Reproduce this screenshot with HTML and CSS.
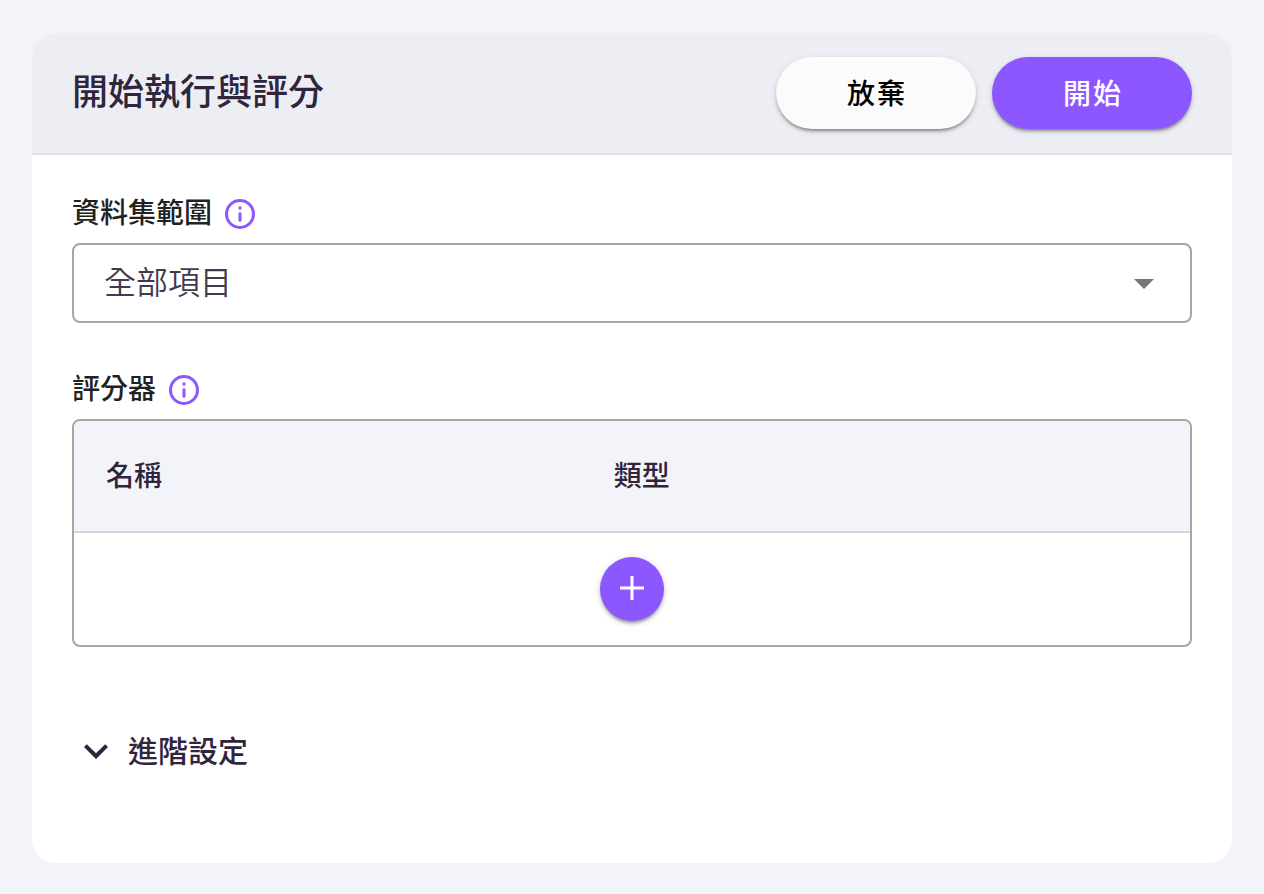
FILE: index.html
```html
<!DOCTYPE html>
<html lang="zh-Hant">
<head>
<meta charset="utf-8">
<meta name="viewport" content="width=device-width, initial-scale=1">
<title>開始執行與評分</title>
<link rel="stylesheet" href="styles.css">
</head>
<body>
<main class="card">
  <header class="card-header">
    <h1 class="title">開始執行與評分</h1>
    <div class="actions">
      <button class="btn btn-plain" type="button">放棄</button>
      <button class="btn btn-primary" type="button">開始</button>
    </div>
  </header>
  <div class="card-body">
    <section class="field">
      <div class="label-row">
        <label class="label" for="scope">資料集範圍</label>
        <svg class="info" viewBox="0 0 24 24" aria-hidden="true"><path d="M11 9h2V7h-2m1 13c-4.41 0-8-3.59-8-8s3.59-8 8-8 8 3.59 8 8-3.59 8-8 8m0-18A10 10 0 0 0 2 12a10 10 0 0 0 10 10 10 10 0 0 0 10-10A10 10 0 0 0 12 2m-1 15h2v-6h-2v6z"/></svg>
      </div>
      <div class="select-wrap">
        <select class="select" id="scope">
          <option>全部項目</option>
        </select>
        <svg class="caret" viewBox="0 0 20 10" aria-hidden="true"><path d="M0 0h20L10 10z"/></svg>
      </div>
    </section>
    <section class="field">
      <div class="label-row">
        <h2 class="label" id="graders">評分器</h2>
        <svg class="info" viewBox="0 0 24 24" aria-hidden="true"><path d="M11 9h2V7h-2m1 13c-4.41 0-8-3.59-8-8s3.59-8 8-8 8 3.59 8 8-3.59 8-8 8m0-18A10 10 0 0 0 2 12a10 10 0 0 0 10 10 10 10 0 0 0 10-10A10 10 0 0 0 12 2m-1 15h2v-6h-2v6z"/></svg>
      </div>
      <div class="table-box">
        <table class="table" aria-labelledby="graders">
          <thead>
            <tr><th class="col-name" scope="col">名稱</th><th scope="col">類型</th></tr>
          </thead>
          <tbody>
            <tr>
              <td class="add-cell" colspan="2">
                <button class="add" type="button" aria-labelledby="graders">
                  <svg class="plus" viewBox="0 0 24 24" aria-hidden="true"><path d="M0 10.5h10.5V0h3v10.5H24v3H13.5V24h-3V13.5H0z"/></svg>
                </button>
              </td>
            </tr>
          </tbody>
        </table>
      </div>
    </section>
    <button class="advanced" type="button" aria-expanded="false">
      <svg class="chevron" viewBox="0 0 24 24" aria-hidden="true"><path d="M7.41 8.58 12 13.17l4.59-4.59L18 10l-6 6-6-6z"/></svg>
      <span class="advanced-text">進階設定</span>
    </button>
  </div>
</main>
</body>
</html>
```
FILE: styles.css
```css
* {
  box-sizing: border-box;
}

body {
  margin: 0;
  padding: 33px 32px 31px;
  min-height: 100vh;
  display: flex;
  flex-direction: column;
  background: #f3f4fa;
  color: #2f263d;
  font-family: "Noto Sans CJK TC", sans-serif;
}

button,
select {
  font-family: inherit;
  border: 0;
  cursor: pointer;
}

.card {
  flex: 1;
  border-radius: 24px;
  background: #fff;
  overflow: hidden;
}

.card-header {
  display: flex;
  align-items: center;
  justify-content: space-between;
  padding: 24px 40px;
  background: #edeef4;
  border-bottom: 2px solid #e2e2e5;
}

.title {
  margin: 0;
  padding-bottom: 8px;
  font-size: 36px;
  line-height: 52px;
  font-weight: 500;
}

.actions {
  display: flex;
  gap: 16px;
}

.btn {
  width: 200px;
  height: 72px;
  padding: 0 0 2px 2px;
  border-radius: 36px;
  font-size: 28px;
  line-height: 40px;
  font-weight: 500;
  letter-spacing: 2px;
  box-shadow: 0 3px 3px -1px rgba(0, 0, 0, .36), 0 2px 6px rgba(0, 0, 0, .14);
}

.btn-plain {
  background: #fbfbfb;
  color: #000;
}

.btn-primary {
  background: #8c57ff;
  color: #fff;
}

.card-body {
  padding: 40px;
}

.field {
  margin-bottom: 48px;
}

.label-row {
  display: flex;
  align-items: flex-end;
  gap: 10px;
  height: 36px;
  margin-bottom: 12px;
}

.label {
  margin: 0;
  padding-bottom: 2px;
  font-size: 28px;
  line-height: 36px;
  font-weight: 500;
  color: #212121;
}

.info {
  width: 36px;
  height: 36px;
  margin-bottom: -1px;
  fill: #8c57ff;
}

.select-wrap {
  position: relative;
}

.select {
  display: block;
  appearance: none;
  width: 100%;
  height: 80px;
  padding: 0 80px 6px 30px;
  border: 2px solid #a6a6a6;
  border-radius: 8px;
  background: #fff;
  color: #433a52;
  font-size: 32px;
  font-weight: 350;
}

.caret {
  position: absolute;
  top: 36px;
  right: 38px;
  width: 20px;
  height: 10px;
  fill: #757575;
  pointer-events: none;
}

.table-box {
  border: 2px solid #a6a6a6;
  border-radius: 8px;
  overflow: hidden;
}

.table {
  width: 100%;
  table-layout: fixed;
  border-collapse: separate;
  border-spacing: 0;
}

.table th {
  height: 112px;
  padding: 0 32px 4px;
  background: #f3f4fa;
  border-bottom: 2px solid #d5d4da;
  text-align: left;
  font-size: 28px;
  line-height: 40px;
  font-weight: 500;
}

.table .col-name {
  width: 45.5%;
}

.add-cell {
  padding: 24px;
}

.add {
  display: flex;
  align-items: center;
  justify-content: center;
  width: 64px;
  height: 64px;
  margin: 0 auto;
  padding: 0 0 2px;
  border-radius: 50%;
  background: #8c57ff;
  box-shadow: 0 3px 3px -1px rgba(0, 0, 0, .3), 0 2px 6px rgba(0, 0, 0, .2);
}

.plus {
  width: 24px;
  height: 24px;
  fill: #fff;
}

.advanced {
  display: flex;
  align-items: center;
  gap: 8px;
  margin-top: 80px;
  padding: 0;
  background: none;
  color: #2f263d;
  font-size: 30px;
  line-height: 44px;
  font-weight: 500;
}

.advanced-text {
  padding-bottom: 4px;
}

.chevron {
  width: 48px;
  height: 48px;
  fill: #2f263d;
}
```
